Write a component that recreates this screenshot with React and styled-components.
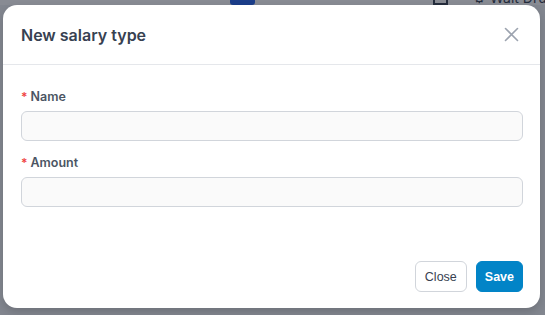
import React from "react";
import styled, { createGlobalStyle } from "styled-components";

const Global = createGlobalStyle`
  html, body { margin: 0; padding: 0; }
  body { font-family: Inter, "Noto Sans", sans-serif; background: #ffffff; }
`;

const Page = styled.div`
  width: 545px;
  height: 315px;
  position: relative;
  overflow: hidden;
  background: #f3f4f6;
`;

const TopBar = styled.div`
  display: flex;
  align-items: flex-end;
  height: 5px;
  background: #ffffff;
  padding-left: 230px;
  overflow: visible;
`;

const Logo = styled.div`
  width: 25px;
  height: 20px;
  border-radius: 3px;
  background: #2563eb;
  flex-shrink: 0;
`;

const TopRight = styled.div`
  display: flex;
  align-items: flex-end;
  gap: 25px;
  margin-left: 178px;
  font-size: 14px;
  line-height: 14px;
  color: #374151;
  white-space: nowrap;
  height: 8px;
  overflow: hidden;
`;

const GridIcon = styled.div`
  width: 15px;
  height: 14px;
  border: 2px solid #374151;
  box-sizing: border-box;
  flex-shrink: 0;
`;

const Backdrop = styled.div`
  position: absolute;
  inset: 0;
  background: rgba(17, 24, 39, 0.5);
`;

const Modal = styled.div`
  position: absolute;
  left: 3px;
  top: 5px;
  width: 537px;
  height: 303px;
  background: #ffffff;
  border-radius: 14px;
  box-shadow: 0 4px 8px rgba(0, 0, 0, 0.15);
  display: flex;
  flex-direction: column;
  box-sizing: border-box;
`;

const Header = styled.div`
  height: 60px;
  display: flex;
  align-items: center;
  justify-content: space-between;
  padding: 0 20px 0 18px;
  border-bottom: 1px solid #e5e7eb;
  box-sizing: border-box;
`;

const Title = styled.h2`
  margin: 0;
  font-size: 16px;
  font-weight: 600;
  color: #374151;
`;

const CloseIcon = styled.button`
  border: none;
  background: none;
  padding: 0;
  width: 18px;
  height: 18px;
  display: flex;
  align-items: center;
  justify-content: center;
  color: #9ca3af;
  cursor: pointer;
`;

const Body = styled.div`
  padding: 24px 17px 0 18px;
  display: flex;
  flex-direction: column;
  gap: 14px;
  flex: 1;
`;

const Field = styled.div`
  display: flex;
  flex-direction: column;
  gap: 6px;
`;

const Label = styled.label`
  font-size: 12.5px;
  font-weight: 600;
  color: #4b5563;
  line-height: 16px;
  display: flex;
  align-items: center;
  gap: 3px;
`;

const Req = styled.span`
  color: #ef4444;
  font-size: 12px;
`;

const Input = styled.input`
  height: 30px;
  box-sizing: border-box;
  width: 100%;
  border: 1px solid #d1d5db;
  border-radius: 6px;
  background: #fafafa;
  font-family: inherit;
  font-size: 13px;
  padding: 0 10px;
  outline: none;
`;

const Footer = styled.div`
  display: flex;
  justify-content: flex-end;
  gap: 9px;
  padding: 0 17px 16px 18px;
`;

const Button = styled.button`
  height: 31px;
  box-sizing: border-box;
  padding: 0 ${(p) => (p.$primary ? "8px" : "9px")};
  min-width: ${(p) => (p.$primary ? "46px" : "50px")};
  border-radius: 6px;
  font-family: "Liberation Sans", Arial, sans-serif;
  font-size: 12.5px;
  font-weight: ${(p) => (p.$primary ? 700 : 400)};
  border: 1px solid ${(p) => (p.$primary ? "#0284c7" : "#d1d5db")};
  background: ${(p) => (p.$primary ? "#0284c7" : "#ffffff")};
  color: ${(p) => (p.$primary ? "#ffffff" : "#374151")};
  cursor: pointer;
`;

export default function App() {
  return (
    <Page>
      <Global />
      <TopBar>
        <Logo />
        <TopRight>
          <GridIcon />
          <span>⚙ Wait Drum</span>
        </TopRight>
      </TopBar>
      <Backdrop />
      <Modal>
        <Header>
          <Title>New salary type</Title>
          <CloseIcon aria-label="Close">
            <svg width="15" height="15" viewBox="0 0 15 15" fill="none">
              <path d="M1.5 1.5L13.5 13.5M13.5 1.5L1.5 13.5" stroke="currentColor" strokeWidth="1.6" strokeLinecap="round" />
            </svg>
          </CloseIcon>
        </Header>
        <Body>
          <Field>
            <Label><Req>*</Req>Name</Label>
            <Input />
          </Field>
          <Field>
            <Label><Req>*</Req>Amount</Label>
            <Input />
          </Field>
        </Body>
        <Footer>
          <Button>Close</Button>
          <Button $primary>Save</Button>
        </Footer>
      </Modal>
    </Page>
  );
}
